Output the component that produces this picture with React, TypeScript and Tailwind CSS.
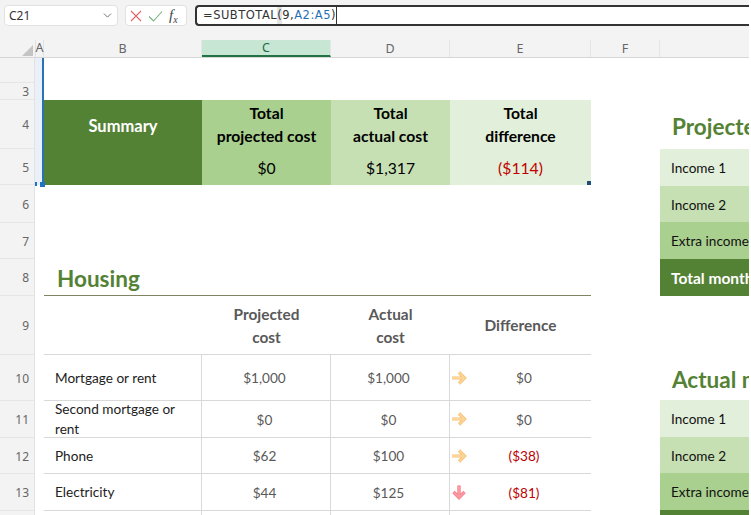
import { ChevronDown } from "lucide-react";

const cols = [
  { label: "B", w: "w-[158px]" },
  { label: "C", w: "w-[129px]" },
  { label: "D", w: "w-[119px]" },
  { label: "E", w: "w-[141px]" },
  { label: "F", w: "w-[69px]" },
];

const rowHeads = [
  { n: "", h: "h-[25px]" },
  { n: "3", h: "h-[17px]" },
  { n: "4", h: "h-[49px]" },
  { n: "5", h: "h-[36px]" },
  { n: "6", h: "h-[38px]" },
  { n: "7", h: "h-[36px]" },
  { n: "8", h: "h-[37px]" },
  { n: "9", h: "h-[59px]" },
  { n: "10", h: "h-[46px]" },
  { n: "11", h: "h-[37px]" },
  { n: "12", h: "h-[36px]" },
  { n: "13", h: "h-[37px]" },
];

const housing = [
  { name: "Mortgage or rent", proj: "$1,000", act: "$1,000", diff: "$0", arrow: "right", h: "h-[46px]" },
  { name: "Second mortgage or rent", proj: "$0", act: "$0", diff: "$0", arrow: "right", h: "h-[37px]" },
  { name: "Phone", proj: "$62", act: "$100", diff: "($38)", arrow: "right", h: "h-[36px]" },
  { name: "Electricity", proj: "$44", act: "$125", diff: "($81)", arrow: "down", h: "h-[37px]" },
];

function Arrow({ dir }: { dir: string }) {
  if (dir === "down") {
    return (
      <svg width="16" height="16" viewBox="0 0 16 16" className="shrink-0">
        <path d="M8 1.5V13M2.5 8L8 13.5 13.5 8" fill="none" stroke="#f27f8b" strokeWidth="3.4" />
        <path d="M8 1.5V13M2.5 8L8 13.5 13.5 8" fill="none" stroke="#fb98a2" strokeWidth="2" />
      </svg>
    );
  }
  return (
    <svg width="16" height="16" viewBox="0 0 16 16" className="shrink-0">
      <path d="M1 8H13.5M8 2.5L13.5 8 8 13.5" fill="none" stroke="#f4bd70" strokeWidth="3.2" />
      <path d="M1 8H13.5M8 2.5L13.5 8 8 13.5" fill="none" stroke="#fcd597" strokeWidth="1.8" />
    </svg>
  );
}

function IncomeRows({ title, headH, total }: { title: string; headH: string; total?: boolean }) {
  return (
    <div className="flex flex-col">
      <div className={`flex items-center pt-[4px] pl-[12px] text-[22.5px] font-bold whitespace-nowrap text-[#548235] ${headH}`}>
        {title}
      </div>
      <div className="flex h-[37px] items-center bg-[#e2efda] pt-[2px] pl-[11px] text-[13.6px] text-[#111]">Income 1</div>
      <div className="flex h-[36px] items-center bg-[#c6e0b4] pt-[2px] pl-[11px] text-[13.6px] text-[#111]">Income 2</div>
      <div className="flex h-[37px] items-center bg-[#a9d08e] pt-[2px] pl-[11px] text-[13.6px] whitespace-nowrap text-[#111]">
        Extra income
      </div>
      <div className="flex h-[37px] items-center bg-[#548235] pt-[2px] pl-[11px] text-[15.5px] font-bold whitespace-nowrap text-white">
        {total ? "Total monthly income" : ""}
      </div>
    </div>
  );
}

export default function App() {
  return (
    <div className="h-[515px] w-[751px] overflow-hidden bg-white">
      <div className="flex h-[515px] w-[749px] flex-col overflow-hidden bg-white font-['Lato',sans-serif]">
        {/* formula bar */}
        <div className="flex h-[40px] shrink-0 items-start gap-[7px] bg-[#f3f3f3] pt-[5px] pl-[4px] font-['Noto_Sans',sans-serif]">
          <div className="flex h-[21px] w-[114px] items-center justify-between rounded-[4px] border border-[#e2e2e2] bg-white pr-[3px] pl-[4px] text-[12px] text-[#333]">
            C21
            <ChevronDown size={13} strokeWidth={1.5} className="text-[#555]" />
          </div>
          <div className="flex h-[21px] w-[62px] items-center gap-[6px] rounded-[4px] border border-[#e2e2e2] bg-white pl-[4px]">
            <svg width="12" height="12" viewBox="0 0 12 12">
              <path d="M1 1l10 10M11 1L1 11" stroke="#e0666a" strokeWidth="1.1" fill="none" />
            </svg>
            <svg width="15" height="12" viewBox="0 0 15 12">
              <path d="M1 6.5l4.5 4.5L14 1.5" stroke="#76b37f" strokeWidth="1.1" fill="none" />
            </svg>
            <span className="font-['Liberation_Serif',serif] text-[15px] leading-none text-[#444] italic">
              f<sub className="text-[10px]">x</sub>
            </span>
          </div>
          <div className="ml-[1px] flex h-[21px] flex-1 items-center rounded-l-[4px] border-y-2 border-l-2 border-[#333] bg-white pl-[6px] font-['DejaVu_Sans',sans-serif] text-[11.5px] tracking-[0.5px] text-[#333]">
            <span>=SUBTOTAL</span>
            <span className="bg-[#e4e4e4]">(</span>
            <span>9,</span>
            <span className="text-[#1f6fb5]">A2:A5</span>
            <span className="border-r border-[#333]">)</span>
          </div>
        </div>

        {/* column headers */}
        <div className="flex h-[18px] shrink-0 border-b border-[#d6d6d6] bg-[#f3f3f3] font-['Noto_Sans',sans-serif] text-[12.5px] text-[#666]">
          <div className="flex w-[35px] items-end justify-end pr-[2px] pb-[1px]">
            <div className="h-0 w-0 border-b-[11px] border-l-[11px] border-b-[#c4c4c4] border-l-transparent" />
          </div>
          <div className="flex w-[9px] items-center justify-center border-x border-[#e2e2e2]">A</div>
          {cols.map((c) => (
            <div
              key={c.label}
              className={`flex items-center justify-center border-r border-[#e6e6e6] pt-[1px] ${c.w} ${
                c.label === "C" ? "border-b-2 border-b-[#217346] bg-[#c8e6d4] text-[#1c6b40]" : ""
              }`}
            >
              {c.label}
            </div>
          ))}
          <div className="flex-1" />
        </div>

        <div className="flex flex-1">
          {/* row headers */}
          <div className="flex w-[35px] shrink-0 flex-col border-r border-[#e2e2e2] bg-[#f3f3f3] font-['Noto_Sans',sans-serif] text-[12px] text-[#666]">
            {rowHeads.map((r) => (
              <div key={r.n} className={`flex items-center justify-end border-b border-[#e6e6e6] pt-[2px] pr-[5px] ${r.h}`}>
                {r.n}
              </div>
            ))}
          </div>

          {/* col A */}
          <div className="flex w-[9px] shrink-0 flex-col">
            <div className="relative h-[127px] border-r-2 border-[#2a72b8] bg-[#e9f0fa]">
              <div className="absolute right-[-3px] bottom-[-2px] h-[5px] w-[5px] bg-[#1f72c4]" />
              <div className="absolute bottom-[-1px] left-[0px] h-[4px] w-[2px] bg-[#1f72c4]" />
            </div>
          </div>

          {/* main sheet */}
          <div className="flex w-[547px] shrink-0 flex-col">
            <div className="h-[42px]" />
            <div className="flex h-[85px]">
              <div className="w-[158px] bg-[#548235] pt-[14px] text-center text-[16.5px] font-bold text-white">Summary</div>
              <div className="flex w-[129px] flex-col items-center bg-[#a9d08e] text-[15.7px] text-black">
                <div className="pt-[2px] text-center leading-[23px] font-bold">
                  Total
                  <br />
                  projected cost
                </div>
                <div className="pt-[10px] leading-[20px]">$0</div>
              </div>
              <div className="flex w-[119px] flex-col items-center bg-[#c6e0b4] text-[15.7px] text-black">
                <div className="pt-[2px] text-center leading-[23px] font-bold">
                  Total
                  <br />
                  actual cost
                </div>
                <div className="pt-[10px] leading-[20px]">$1,317</div>
              </div>
              <div className="relative flex w-[141px] flex-col items-center bg-[#e2efda] text-[15.7px] text-black">
                <div className="pt-[2px] text-center leading-[23px] font-bold">
                  Total
                  <br />
                  difference
                </div>
                <div className="pt-[10px] leading-[20px] text-[#c00000]">($114)</div>
                <div className="absolute right-0 bottom-0 h-[4px] w-[4px] bg-[#1f4e79]" />
              </div>
            </div>

            <div className="h-[74px]" />
            <div className="flex h-[37px] items-end border-b border-[#7f8560] pl-[13px] text-[22.5px] leading-[32px] font-bold text-[#548235]">
              Housing
            </div>
            <div className="flex h-[59px] border-b border-[#d9d9d9] pt-[2px] text-[15.4px] font-bold text-[#595959]">
              <div className="w-[158px]" />
              <div className="flex w-[129px] items-center justify-center text-center leading-[23px]">
                Projected
                <br />
                cost
              </div>
              <div className="flex w-[119px] items-center justify-center text-center leading-[23px]">
                Actual
                <br />
                cost
              </div>
              <div className="flex w-[141px] items-center justify-center">Difference</div>
            </div>
            {housing.map((row) => (
              <div key={row.name} className={`flex border-b border-[#d9d9d9] text-[13.6px] ${row.h}`}>
                <div className="flex w-[158px] items-center border-r border-[#d9d9d9] pr-[8px] pl-[11px] leading-[20px] text-[#222]">
                  {row.name}
                </div>
                <div className="flex w-[129px] items-center justify-center border-r border-[#d9d9d9] pt-[2px] pr-[3px] text-[#595959]">
                  {row.proj}
                </div>
                <div className="flex w-[119px] items-center justify-center border-r border-[#d9d9d9] pt-[2px] pr-[3px] text-[#595959]">
                  {row.act}
                </div>
                <div className="flex w-[141px] items-center pl-[1px]">
                  <Arrow dir={row.arrow} />
                  <span
                    className={`flex-1 pt-[2px] pr-[10px] text-center ${row.diff.startsWith("(") ? "text-[#c00000]" : "text-[#595959]"}`}
                  >
                    {row.diff}
                  </span>
                </div>
              </div>
            ))}
            <div className="flex flex-1">
              <div className="w-[158px] border-r border-[#d9d9d9]" />
              <div className="w-[129px] border-r border-[#d9d9d9]" />
              <div className="w-[119px] border-r border-[#d9d9d9]" />
            </div>
          </div>

          {/* right column */}
          <div className="ml-[69px] flex min-w-0 flex-1 flex-col overflow-hidden pt-[42px]">
            <IncomeRows title="Projected monthly income" headH="h-[49px]" total />
            <div className="h-[59px] shrink-0" />
            <IncomeRows title="Actual monthly income" headH="h-[45px]" />
          </div>
        </div>
      </div>
    </div>
  );
}
